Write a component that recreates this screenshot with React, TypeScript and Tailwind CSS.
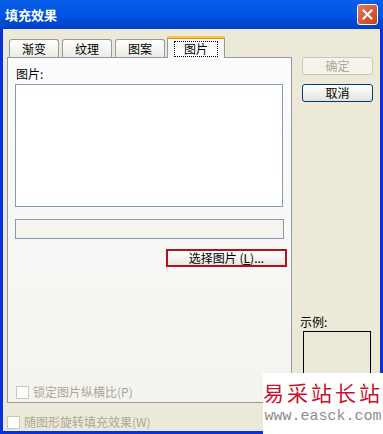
const cjk = { fontFamily: '"Noto Sans CJK SC", "Noto Sans", sans-serif' };

function Tab({ label, active }: { label: string; active?: boolean }) {
  if (active) {
    return (
      <div className="relative z-10 -mb-px flex h-[22px] w-[58px] flex-col rounded-t-[3px] border border-b-0 border-[#919b9c] bg-[#fcfcfe]">
        <div className="h-[3px] rounded-t-[2px] bg-[#ffc83c] border-b border-[#e68b2c] -mx-px -mt-px" />
        <div className="flex flex-1 items-center justify-center">
          <span className="border border-dotted border-black px-[9px] leading-[14px] text-[12px] text-black">{label}</span>
        </div>
      </div>
    );
  }
  return (
    <div className="flex h-[18px] w-[50px] items-center justify-center rounded-t-[3px] border border-b-0 border-[#919b9c] bg-gradient-to-b from-white to-[#ecebe6] text-[12px] text-black">
      {label}
    </div>
  );
}

function XpButton({ children, disabled, focus }: { children: React.ReactNode; disabled?: boolean; focus?: boolean }) {
  return (
    <div
      className={
        disabled
          ? "flex h-[18px] items-center justify-center rounded-[3px] border border-[#c9c7ba] bg-[#f5f4ea] text-[12px] text-[#aca899]"
          : focus
          ? "flex h-[18px] items-center justify-center border-2 border-[#b4101c] bg-gradient-to-b from-white to-[#e9e8e2] text-[12px] text-black"
          : "flex h-[18px] items-center justify-center rounded-[3px] border border-[#003c74] bg-gradient-to-b from-white to-[#e3e2da] text-[12px] text-black"
      }
    >
      {children}
    </div>
  );
}

function Check({ label }: { label: string }) {
  return (
    <div className="flex items-center gap-[4px] text-[12px] text-[#aca899]">
      <div className="h-[13px] w-[13px] border border-[#cac8bb] bg-white" />
      <span>{label}</span>
    </div>
  );
}

export default function App() {
  return (
    <div className="relative flex h-[434px] w-[383px] flex-col overflow-hidden bg-[#0831d9]" style={cjk}>
      <div className="flex h-[29px] items-center justify-between bg-gradient-to-b from-[#0a5fe8] via-[#0054e3] to-[#0040c8] pl-[5px] pr-[5px]">
        <span className="text-[13px] font-bold text-white">填充效果</span>
        <div className="flex h-[21px] w-[21px] items-center justify-center rounded-[3px] border border-white bg-gradient-to-br from-[#e8775a] to-[#c1401c]">
          <svg width="11" height="11" viewBox="0 0 11 11">
            <path d="M1.5 1.5 L9.5 9.5 M9.5 1.5 L1.5 9.5" stroke="white" strokeWidth="2" strokeLinecap="square" />
          </svg>
        </div>
      </div>
      <div className="mx-[3px] mb-[3px] flex flex-1 bg-[#ece9d8] pl-[4px] pt-[7px]">
        <div className="flex w-[285px] flex-col">
          <div className="flex h-[21px] items-end gap-[3px] pl-[2px]">
            <Tab label="渐变" />
            <Tab label="纹理" />
            <Tab label="图案" />
            <div className="-ml-px">
              <Tab label="图片" active />
            </div>
          </div>
          <div className="flex h-[346px] flex-col border border-[#919b9c] bg-gradient-to-b from-[#fcfcfe] to-[#f4f3ee] px-[7px] pt-[8px]">
            <div className="pl-px text-[12px] leading-[16px] text-black">图片:</div>
            <div className="mt-[2px] h-[123px] w-[268px] border border-[#7f9db9] bg-white" />
            <div className="mt-[12px] h-[20px] w-[269px] border border-[#7f9db9] bg-[#f5f4ee]" />
            <div className="mt-[10px] ml-[151px] w-[121px]">
              <XpButton focus>选择图片 (<span className="underline">L</span>)...</XpButton>
            </div>
            <div className="mt-[116px] pl-px">
              <Check label="锁定图片纵横比(P)" />
            </div>
          </div>
          <div className="mt-[10px] pl-[0px]">
            <Check label="随图形旋转填充效果(W)" />
          </div>
        </div>
        <div className="ml-[10px] flex w-[71px] flex-col pt-[21px]">
          <XpButton disabled>确定</XpButton>
          <div className="mt-[9px]">
            <XpButton>取消</XpButton>
          </div>
          <div className="-ml-[2px] mt-[212px] text-[12px] leading-[16px] text-black">示例:</div>
          <div className="ml-[1px] mt-[1px] h-[80px] w-[68px] border border-black bg-[#ece9d8]" />
        </div>
      </div>
      <div className="absolute bottom-0 right-0 flex h-[61px] w-[120px] flex-col items-center bg-white pt-[6px]">
        <div className="text-[21px] leading-[26px] tracking-[3px] text-[#c8102e]" style={{ fontFamily: '"Noto Sans CJK SC", serif' }}>易采站长站</div>
        <div className="mt-[4px] text-[15px] leading-[16px] text-[#8c8c8c]" style={{ fontFamily: '"Liberation Mono", monospace' }}>www.easck.com</div>
      </div>
    </div>
  );
}
